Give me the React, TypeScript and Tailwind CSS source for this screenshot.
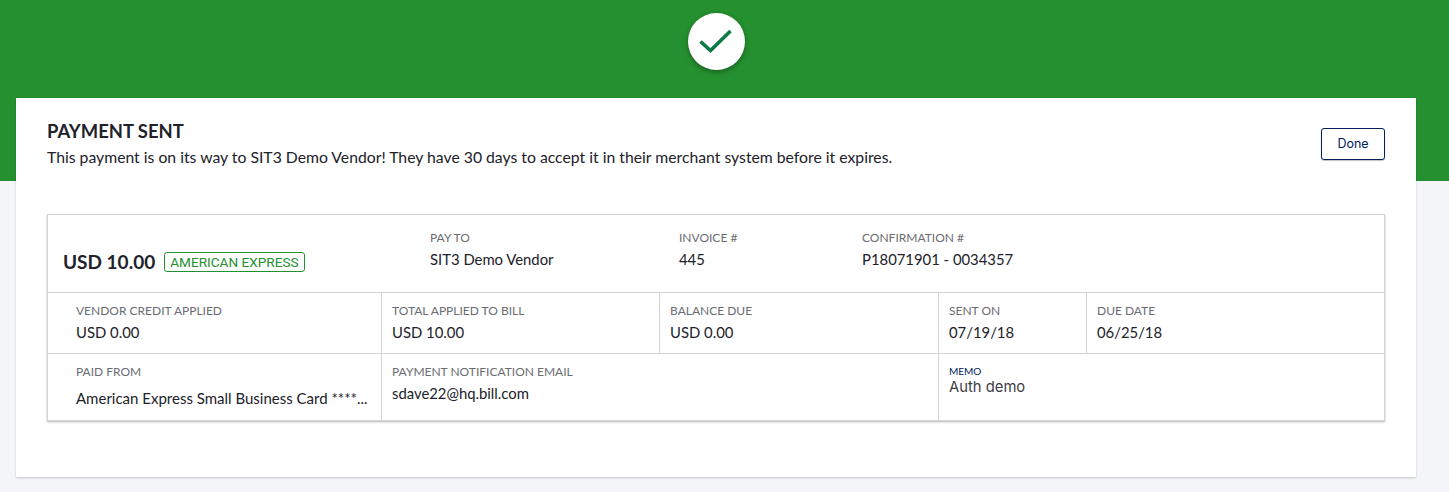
const lato = "font-['Lato','Open_Sans',sans-serif]";

const Field = ({ label, value, className }: { label: string; value: string; className?: string }) => (
  <div className={className}>
    <div className="text-[12px] leading-[16px] text-[#6b6c72]">{label}</div>
    <div className="mt-[3px] text-[14.85px] leading-[20px] text-[#212129]">{value}</div>
  </div>
);

const App = () => {
  return (
    <div className={`${lato} h-[492px] overflow-hidden bg-[#f4f5f8]`}>
      <div className="flex h-[181px] justify-center bg-[#25902f] pt-[13px] pr-[17px]">
        <div className="flex h-[57px] w-[57px] items-center justify-center rounded-full bg-white shadow-[0_2px_5px_rgba(0,0,0,0.35)]">
          <svg width="36" height="28" viewBox="0 0 36 28" fill="none">
            <path d="M2.5 13.5 L12.5 22.5 L32.5 3" stroke="#0b7a45" strokeWidth="3.6" />
          </svg>
        </div>
      </div>

      <div className="relative -mt-[83px] mr-[33px] ml-4 h-[379px] bg-white px-[31px] pt-[22px] shadow-[0_1px_2px_rgba(0,0,0,0.2)]">
        <div className="flex items-start justify-between">
          <div>
            <h1 className="text-[18.4px] leading-[22px] font-bold text-[#212129]">PAYMENT SENT</h1>
            <p className="mt-[4px] text-[15.75px] leading-[22px] text-[#212129]">
              This payment is on its way to SIT3 Demo Vendor! They have 30 days to accept it in their merchant system before it expires.
            </p>
          </div>
          <button className="mt-2 h-8 w-16 rounded-[3px] border border-[#00205b] bg-white font-['Inter',sans-serif] text-[12.5px] text-[#00205b] shadow-[0_1px_1px_rgba(0,0,0,0.25)]">
            Done
          </button>
        </div>

        <div className="mt-[46px] h-[207px] border border-[#d4d4d2] shadow-[0_1px_2px_rgba(0,0,0,0.3)]">
          <div className="flex h-[78px] border-b border-[#d4d4d2]">
            <div className="flex w-[382px] items-center pt-[17px] pl-[15px]">
              <span className="text-[19px] font-bold text-[#212129]">USD 10.00</span>
              <span className="ml-[9px] rounded-[3px] border border-[#25902f] px-[5px] font-['Roboto',sans-serif] text-[13.6px] leading-[18px] text-[#25902f]">
                AMERICAN EXPRESS
              </span>
            </div>
            <div className="flex pt-[15px]">
              <Field label="PAY TO" value="SIT3 Demo Vendor" className="w-[249px]" />
              <Field label="INVOICE #" value="445" className="w-[183px]" />
              <Field label="CONFIRMATION #" value="P18071901 - 0034357" />
            </div>
          </div>

          <div className="flex h-[61px] border-b border-[#d4d4d2]">
            <Field label="VENDOR CREDIT APPLIED" value="USD 0.00" className="w-[334px] border-r border-[#d4d4d2] pt-[10px] pl-7" />
            <Field label="TOTAL APPLIED TO BILL" value="USD 10.00" className="w-[278px] border-r border-[#d4d4d2] pt-[10px] pl-[10px]" />
            <Field label="BALANCE DUE" value="USD 0.00" className="w-[279px] border-r border-[#d4d4d2] pt-[10px] pl-[10px]" />
            <Field label="SENT ON" value="07/19/18" className="w-[148px] border-r border-[#d4d4d2] pt-[10px] pl-[10px]" />
            <Field label="DUE DATE" value="06/25/18" className="pt-[10px] pl-[10px]" />
          </div>

          <div className="flex h-[66px]">
            <div className="w-[334px] border-r border-[#d4d4d2] pt-[10px] pl-7">
              <div className="text-[12px] leading-[16px] text-[#6b6c72]">PAID FROM</div>
              <div className="mt-[8px] text-[15px] leading-[20px] whitespace-nowrap text-[#212129]">
                American Express Small Business Card ****...
              </div>
            </div>
            <Field label="PAYMENT NOTIFICATION EMAIL" value="sdave22@hq.bill.com" className="w-[557px] border-r border-[#d4d4d2] pt-[10px] pl-[10px]" />
            <div className="pt-[11px] pl-[10px]">
              <div className="text-[10px] leading-[12px] text-[#00205b]">MEMO</div>
              <div className="font-['Inter','Lato',sans-serif] text-[14.8px] leading-[20px] text-[#3c3d45]">Auth demo</div>
            </div>
          </div>
        </div>
      </div>
    </div>
  );
};

export default App;
